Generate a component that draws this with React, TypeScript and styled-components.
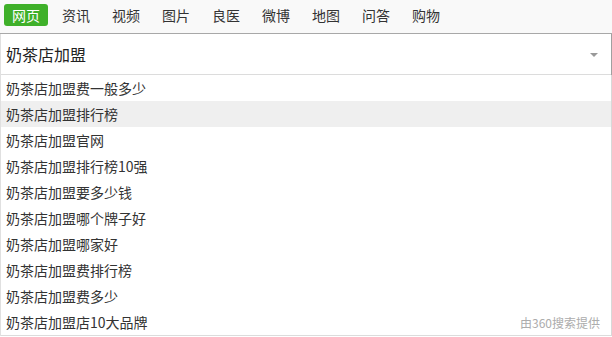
import React from "react";
import styled, { createGlobalStyle } from "styled-components";

const Global = createGlobalStyle`
  html, body { margin: 0; padding: 0; background: #fff; }
  body { font-family: "Noto Sans CJK SC", "Noto Sans", sans-serif; }
`;

const Page = styled.div`
  width: 612px;
  height: 337px;
  overflow: hidden;
  display: flex;
  flex-direction: column;
`;

const TabBar = styled.div`
  height: 34px;
  flex: none;
  box-sizing: border-box;
  background: #f9f9f9;
  border-bottom: 1px solid #a8a8a8;
  display: flex;
  align-items: flex-start;
  padding: 4px 0 0 4px;
  gap: 6px;
`;

const Tab = styled.div<{ $active?: boolean }>`
  width: 44px;
  height: 22px;
  border-radius: 3px;
  display: flex;
  align-items: center;
  justify-content: center;
  font-size: 14px;
  line-height: 22px;
  color: ${(p) => (p.$active ? "#fff" : "#333")};
  background: ${(p) => (p.$active ? "#3fb02a" : "transparent")};
`;

const Box = styled.div`
  border-left: 1px solid #e0e0e0;
  border-right: 1px solid #a0a0a0;
  display: flex;
  flex-direction: column;
`;

const InputRow = styled.div`
  height: 41px;
  flex: none;
  box-sizing: border-box;
  border-bottom: 1px solid #dcdcdc;
  display: flex;
  align-items: center;
  justify-content: space-between;
  padding: 0 13px 0 5px;
  font-size: 16px;
  color: #222;
`;

const Arrow = styled.div`
  width: 0;
  height: 0;
  border-left: 4px solid transparent;
  border-right: 4px solid transparent;
  border-top: 4px solid #999;
  margin-top: 2px;
`;

const List = styled.div`
  position: relative;
  border-right: 1px solid #d8d8d8;
  border-bottom: 1px solid #dcdcdc;
  margin-right: -1px;
  display: flex;
  flex-direction: column;
`;

const Item = styled.div<{ $hover?: boolean }>`
  height: 26px;
  flex: none;
  display: flex;
  align-items: center;
  padding-left: 5px;
  font-size: 14px;
  color: #333;
  background: ${(p) => (p.$hover ? "#efefef" : "transparent")};
`;

const Credit = styled.div`
  position: absolute;
  right: 11px;
  bottom: 4px;
  font-size: 12px;
  color: #acacac;
`;

const tabs = ["网页", "资讯", "视频", "图片", "良医", "微博", "地图", "问答", "购物"];
const items = [
  "奶茶店加盟费一般多少",
  "奶茶店加盟排行榜",
  "奶茶店加盟官网",
  "奶茶店加盟排行榜10强",
  "奶茶店加盟要多少钱",
  "奶茶店加盟哪个牌子好",
  "奶茶店加盟哪家好",
  "奶茶店加盟费排行榜",
  "奶茶店加盟费多少",
  "奶茶店加盟店10大品牌",
];

export default function App() {
  return (
    <Page>
      <Global />
      <TabBar>
        {tabs.map((t, i) => (
          <Tab key={t} $active={i === 0}>
            {t}
          </Tab>
        ))}
      </TabBar>
      <Box>
        <InputRow>
          <span>奶茶店加盟</span>
          <Arrow />
        </InputRow>
        <List>
          {items.map((t, i) => (
            <Item key={t} $hover={i === 1}>
              {t}
            </Item>
          ))}
          <Credit>由360搜索提供</Credit>
        </List>
      </Box>
    </Page>
  );
}
